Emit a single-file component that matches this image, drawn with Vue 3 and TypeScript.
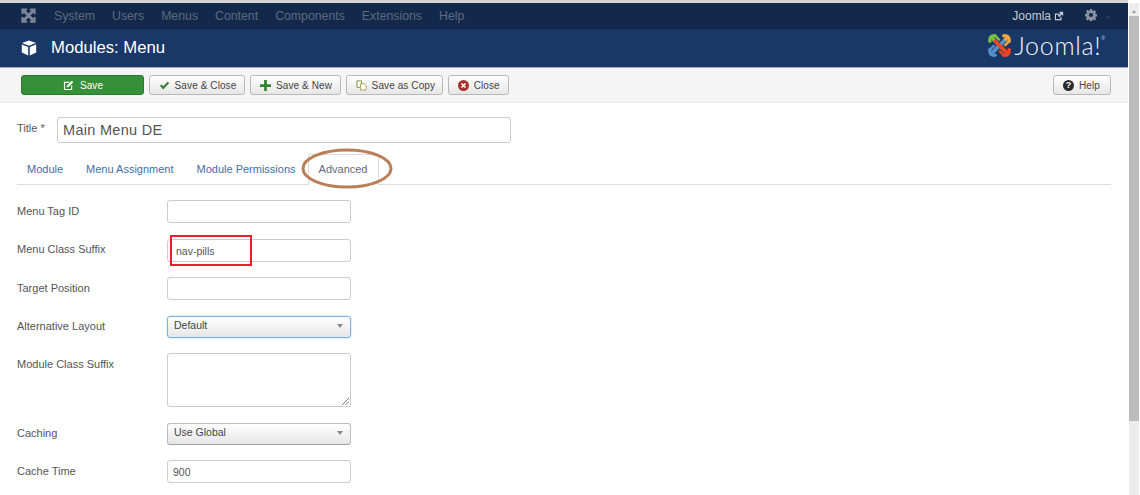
<script setup lang="ts">
const navItems: string[] = ['System', 'Users', 'Menus', 'Content', 'Components', 'Extensions', 'Help']
const tabs: string[] = ['Module', 'Menu Assignment', 'Module Permissions']
const arms: { color: string; angle: number }[] = [
  { color: '#7ac143', angle: 0 },
  { color: '#f9a541', angle: 90 },
  { color: '#5091cd', angle: 270 },
  { color: '#f44321', angle: 180 },
]
</script>

<template>
  <div class="page">
    <div class="main">
      <nav class="nav">
        <svg class="nav-logo" viewBox="0 0 16 16" width="15" height="15">
          <g fill="none" stroke="#7c8797" stroke-linecap="round">
            <path d="M3.5 3.5 L12.5 12.5 M12.5 3.5 L3.5 12.5" stroke-width="3" />
            <path d="M1.6 5.5 V1.6 H5.5 M10.5 1.6 H14.4 V5.5 M14.4 10.5 V14.4 H10.5 M5.5 14.4 H1.6 V10.5" stroke-width="2.4" />
          </g>
        </svg>
        <ul class="nav-list">
          <li v-for="item in navItems" :key="item">{{ item }}</li>
        </ul>
        <div class="nav-right">
          <span class="site">Joomla</span>
          <svg class="ext" viewBox="0 0 12 12" width="10" height="10">
            <path d="M1 3h5v1.4H2.4v5.2h5.2V7H9v4H1z" fill="#c3cad4" />
            <path d="M6 1h5v5L9.3 4.3 6.2 7.4 4.6 5.8l3.1-3.1z" fill="#c3cad4" />
          </svg>
          <svg class="gear" viewBox="0 0 16 16" width="12" height="12">
            <path fill="#8a93a1" fill-rule="evenodd" d="M6.6 0h2.8l.4 2.1 1.3.6 1.8-1.2 2 2-1.2 1.8.6 1.3 2.1.4v2.8l-2.1.4-.6 1.3 1.2 1.8-2 2-1.8-1.2-1.3.6-.4 2.1H6.6l-.4-2.1-1.3-.6-1.8 1.2-2-2 1.2-1.8-.6-1.3L0 9.4V6.6l2.1-.4.6-1.3-1.2-1.8 2-2 1.8 1.2 1.3-.6zM8 5.2a2.8 2.8 0 100 5.6 2.8 2.8 0 000-5.6z" />
          </svg>
          <span class="caret"></span>
        </div>
      </nav>

      <header class="head">
        <svg class="cube" viewBox="0 0 16 16" width="16" height="16">
          <path fill="#fff" d="M8 0.4 15 3 8 5.8 1 3z" />
          <path fill="#fff" d="M.8 4.4 7.2 7v8.4L.8 12.6zM15.2 4.4 8.8 7v8.4l6.4-2.8z" />
        </svg>
        <h1 class="head-title">Modules: Menu</h1>
        <div class="brand">
          <svg class="brand-mark" viewBox="0 0 26 26" width="25" height="25">
            <g
              v-for="arm in arms"
              :key="arm.color"
              fill="none"
              :stroke="arm.color"
              stroke-width="3.6"
              stroke-linecap="round"
              :transform="`rotate(${arm.angle} 13 13)`"
            >
              <path d="M17.5 17.5 L6.5 6.5" />
              <path d="M3 8.5 Q2.5 2.5 8.5 3" />
              <path d="M8.5 3 L12.5 7" stroke-width="2.6" />
            </g>
          </svg>
          <span class="brand-name">Joomla!</span><span class="brand-reg">®</span>
        </div>
      </header>

      <div class="toolbar">
        <button class="btn btn-save">
          <svg viewBox="0 0 12 12" width="11" height="11">
            <path fill="#fff" d="M1 2h6.5L6.3 3.2H2.2v6.6h6.6V6.5L10 5.3V11H1z" />
            <path fill="#fff" d="M9.6.8l1.6 1.6L6 7.6l-2.1.5.5-2.1z" />
          </svg>
          Save
        </button>
        <button class="btn">
          <svg viewBox="0 0 12 12" width="11" height="11"><path fill="#378137" d="M1 6.4 2.8 4.8 4.6 6.8 9.4 1.8 11.2 3.4 4.6 10.4z" /></svg>
          Save &amp; Close
        </button>
        <button class="btn">
          <svg viewBox="0 0 12 12" width="11" height="11"><path fill="#378137" d="M4.5 0h3v4.5H12v3H7.5V12h-3V7.5H0v-3h4.5z" /></svg>
          Save &amp; New
        </button>
        <button class="btn btn-copy">
          <svg viewBox="0 0 12 12" width="11" height="11">
            <path fill="#fff" stroke="#6b8f3f" d="M1 1h5v7H1z" />
            <path fill="#fff" stroke="#a8a04a" d="M5 4h4l2 2v5H5z" />
          </svg>
          Save as Copy
        </button>
        <button class="btn">
          <svg viewBox="0 0 12 12" width="11" height="11">
            <circle cx="6" cy="6" r="6" fill="#a9322f" />
            <path d="M3.8 3.8l4.4 4.4M8.2 3.8l-4.4 4.4" stroke="#fff" stroke-width="1.8" />
          </svg>
          Close
        </button>
        <button class="btn btn-help">
          <span class="help-dot">?</span>
          Help
        </button>
      </div>

      <main class="content">
        <div class="title-row">
          <label class="title-label">Title *</label>
          <div class="title-input">Main Menu DE</div>
        </div>

        <div class="tabs">
          <a v-for="tab in tabs" :key="tab" class="tab">{{ tab }}</a>
          <a class="tab tab-active">Advanced</a>
        </div>

        <div class="form">
          <div class="row"><label>Menu Tag ID</label><div class="field"></div></div>
          <div class="row">
            <label>Menu Class Suffix</label>
            <div class="field field-marked">nav-pills<span class="red-mark"></span></div>
          </div>
          <div class="row"><label>Target Position</label><div class="field"></div></div>
          <div class="row">
            <label>Alternative Layout</label>
            <div class="select select-focus">Default<span class="arrow"></span></div>
          </div>
          <div class="row">
            <label>Module Class Suffix</label>
            <div class="field area">
              <svg class="grip" viewBox="0 0 8 8" width="8" height="8">
                <path d="M1 8 8 1M4.5 8 8 4.5" stroke="#777" stroke-width="1" />
              </svg>
            </div>
          </div>
          <div class="row">
            <label>Caching</label>
            <div class="select">Use Global<span class="arrow"></span></div>
          </div>
          <div class="row"><label>Cache Time</label><div class="field">900</div></div>
        </div>

        <svg class="ring" viewBox="0 0 92 41" width="92" height="41">
          <ellipse cx="46" cy="20.5" rx="44" ry="18.5" fill="none" stroke="#b87f58" stroke-width="3" />
        </svg>
      </main>
    </div>

    <aside class="scrollbar">
      <span class="scroll-up"></span>
      <span class="scroll-thumb"></span>
    </aside>
  </div>
</template>

<style>
html, body { margin: 0; background: #fff; overflow: hidden; }
</style>

<style scoped>
.page {
  display: flex;
  width: 1140px;
  height: 495px;
  overflow: hidden;
  font-family: "Liberation Sans", Arial, sans-serif;
  font-size: 11px;
  color: #555;
  background: #fff;
}
.main {
  width: 1128px;
  display: flex;
  flex-direction: column;
  border-top: 3px solid #d4d4d4;
  box-sizing: border-box;
}
.nav {
  height: 26px;
  flex: none;
  background: #13294b;
  display: flex;
  align-items: center;
  padding-left: 21px;
}
.nav-logo { margin-top: -1px; }
.nav-list {
  list-style: none;
  display: flex;
  gap: 17px;
  margin: 0 0 0 18px;
  padding: 0;
  color: #5d6a80;
  font-size: 12.3px;
}
.nav-right {
  margin-left: auto;
  display: flex;
  align-items: center;
  color: #c3cad4;
  font-size: 12px;
  padding-right: 17px;
}
.ext { margin-left: 3px; }
.gear { margin: -2px 0 0 21px; }
.caret {
  width: 0;
  height: 0;
  margin: 2px 0 0 8px;
  border: 3.5px solid transparent;
  border-top-color: #24395a;
  border-bottom: 0;
}
.head {
  height: 38px;
  flex: none;
  background: #1a3867;
  border-bottom: 1px solid #9aa7bb;
  display: flex;
  align-items: center;
  padding-left: 21px;
  color: #fff;
}
.head-title {
  margin: 0 0 0 14px;
  font-size: 16.7px;
  font-weight: 400;
}
.brand {
  margin-left: auto;
  display: flex;
  align-items: center;
  padding-right: 23px;
  margin-top: -6px;
}
.brand-name {
  font-family: Lato, "Liberation Sans", sans-serif;
  font-weight: 300;
  font-size: 25px;
  line-height: 25px;
  margin-left: 3px;
  letter-spacing: .7px;
  color: #f2f4f7;
}
.brand-reg {
  font-size: 5px;
  align-self: flex-start;
  color: #cfd6e0;
  margin-top: 2px;
}
.toolbar {
  height: 35px;
  flex: none;
  box-sizing: border-box;
  background: #f5f5f5;
  border-bottom: 1px solid #e6e6e6;
  display: flex;
  align-items: center;
  gap: 4.6px;
  padding: 0 17px 0 21px;
}
.btn {
  height: 20px;
  box-sizing: border-box;
  padding: 0 8px 0 9px;
  display: flex;
  align-items: center;
  gap: 5px;
  border: 1px solid #b9b9b9;
  border-radius: 3px;
  background: linear-gradient(#fff, #e6e6e6);
  font-family: inherit;
  font-size: 10px;
  letter-spacing: .1px;
  color: #444;
  white-space: nowrap;
}
.btn-save {
  width: 123px;
  justify-content: center;
  gap: 6px;
  background: #36903a;
  border-color: #2a7a2e;
  color: #fff;
}
.btn-copy { padding-right: 7px; }
.btn-help { margin-left: auto; padding-right: 10px; }
.help-dot {
  width: 11px;
  height: 11px;
  border-radius: 50%;
  background: #2b2b2b;
  color: #fff;
  font-size: 9px;
  font-weight: 700;
  line-height: 11px;
  text-align: center;
  letter-spacing: 0;
}
.content {
  position: relative;
  flex: 1;
  padding: 14px 17px 0;
}
.title-row {
  display: flex;
  align-items: flex-start;
}
.title-label {
  width: 40px;
  font-size: 11px;
  margin-top: 5px;
}
.title-input {
  width: 454px;
  height: 26px;
  box-sizing: border-box;
  padding: 0 5px;
  border: 1px solid #ccc;
  border-radius: 3px;
  font-size: 14.5px;
  line-height: 24px;
  letter-spacing: .3px;
  color: #555;
}
.tabs {
  display: flex;
  height: 30px;
  margin-top: 11px;
  border-bottom: 1px solid #ddd;
  width: 1094px;
}
.tab {
  height: 30px;
  box-sizing: border-box;
  padding: 0 10px;
  margin-right: 3px;
  line-height: 30px;
  color: #3f6fa3;
  font-size: 11px;
  white-space: nowrap;
}
.tab-active {
  height: 31px;
  margin-left: -1px;
  line-height: 28px;
  color: #5f6b7a;
  background: #fff;
  border: 1px solid #ddd;
  border-bottom: 0;
}
.form {
  display: flex;
  flex-direction: column;
  gap: 15.5px;
  margin-top: 15px;
}
.row {
  display: flex;
  align-items: flex-start;
}
.row label {
  width: 150px;
  flex: none;
  padding-top: 4.5px;
  font-size: 11px;
}
.field, .select {
  position: relative;
  width: 184px;
  box-sizing: border-box;
  border-radius: 3px;
  padding: 0 5px;
  font-size: 10.5px;
  color: #555;
}
.field {
  height: 23px;
  border: 1px solid #ccc;
  line-height: 23px;
  background: #fff;
}
.field-marked { padding-left: 8px; }
.area { height: 54px; }
.grip { position: absolute; right: 1px; bottom: 1px; }
.select {
  height: 22px;
  line-height: 17px;
  padding-left: 6px;
  border: 1px solid #bbb;
  border-bottom-color: #a2a2a2;
  background: linear-gradient(#fff, #e6e6e6);
  color: #444;
}
.select-focus {
  border-color: #7bb2e2;
  box-shadow: 0 0 2px #9ecaed;
}
.arrow {
  position: absolute;
  right: 7px;
  top: 7px;
  width: 0;
  height: 0;
  border: 3px solid transparent;
  border-top: 4px solid #888;
  border-bottom: 0;
}
.red-mark {
  position: absolute;
  left: 2px;
  top: -5px;
  width: 82px;
  height: 31px;
  box-sizing: border-box;
  border: 2px solid #e8202e;
}
.ring {
  position: absolute;
  left: 301px;
  top: 45px;
}
.scrollbar {
  position: relative;
  flex: none;
  width: 12px;
  margin-top: 3px;
  box-sizing: border-box;
  border-left: 1px solid #fff;
  border-right: 1px solid #fff;
  background: #ececec;
}
.scroll-up {
  position: absolute;
  left: 3px;
  top: 7px;
  width: 0;
  height: 0;
  border: 2.5px solid transparent;
  border-bottom: 3px solid #9c9c9c;
  border-top: 0;
}
.scroll-thumb {
  position: absolute;
  left: 0;
  right: 0;
  top: 13px;
  height: 405px;
  background: #bcbcbc;
}
</style>
